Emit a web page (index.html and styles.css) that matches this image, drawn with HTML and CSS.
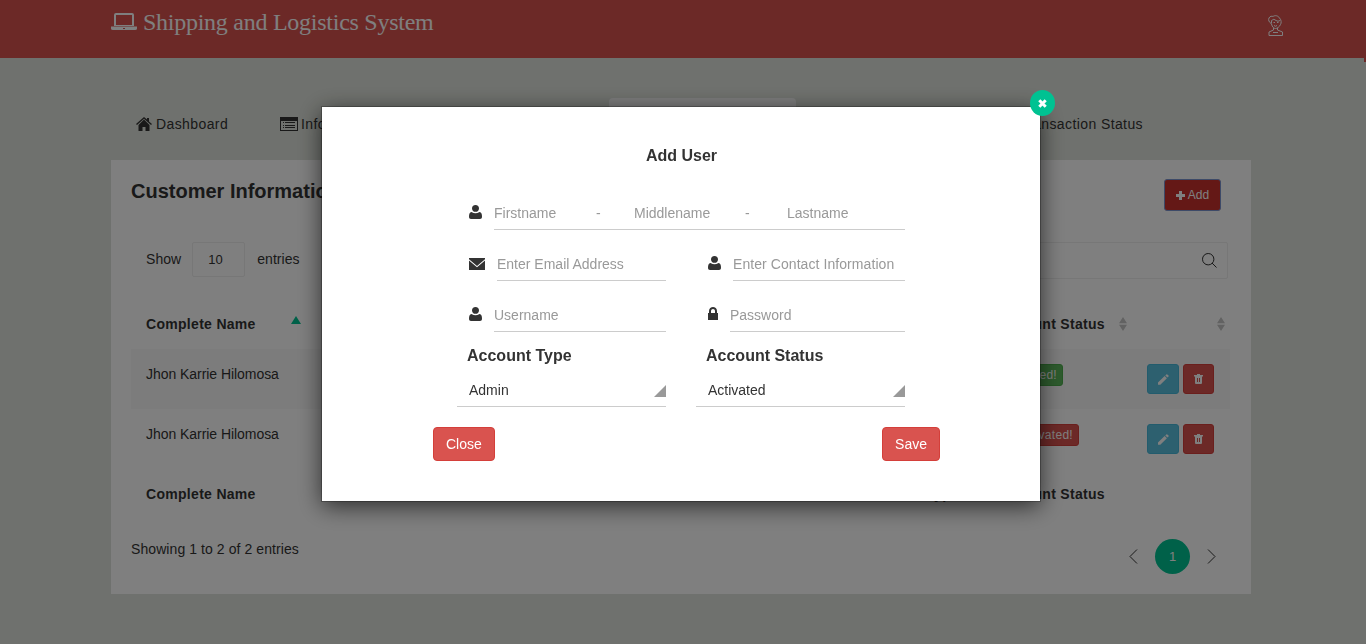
FILE: index.html
```html
<!DOCTYPE html>
<html lang="en">
<head>
<meta charset="utf-8">
<title>Shipping and Logistics System</title>
<link rel="stylesheet" href="styles.css">
</head>
<body>
<svg class="defs" width="0" height="0">
  <symbol id="user" viewBox="0 0 13 14"><path d="M6.500 0C8.700 0 10 1.400 10 3.400S8.500 6.800 6.500 6.800 3 5.400 3 3.400 4.300 0 6.500 0zM2.500 7Q4.600 8.200 6.500 8.200T10.500 7C12.500 7.500 13 9 13 11.800 13 13.200 12.200 14 11 14H2C.8 14 0 13.200 0 11.800 0 9 .5 7.500 2.500 7z"/></symbol>
  <symbol id="sort" viewBox="0 0 8 14"><path d="M4 0l4 6.200H0zM4 14l4-6.200H0z"/></symbol>
  <symbol id="pencil" viewBox="0 0 11 11"><path d="M0 10.700V8.600L6.600 2l2.300 2.300L2.300 10.700zM7.300 1.400L8.300.4q.5-.5 1 0l1.200 1.200q.5.500 0 1l-1 1z"/></symbol>
  <symbol id="trash" viewBox="0 0 9 10"><path fill-rule="evenodd" d="M0 1h3V0h3v1h3v1.500H8V9q0 1-1 1H2Q1 10 1 9V2.500H0zM3 4v4h1V4zM5 4v4h1V4z"/></symbol>
</svg>

<header class="topbar">
  <div class="brand">
    <svg class="brand-icon" width="26" height="18" viewBox="0 0 26 18"><path fill-rule="evenodd" d="M5 0h16q2 0 2 2v11H3V2q0-2 2-2zM5 2v10h16V2zM0 13.500h26v2q0 1.500-2 1.500H2q-2 0-2-1.500zM12 15v1h2v-1z"/></svg>
    <span>Shipping and Logistics System</span>
  </div>
  <svg class="avatar" width="15" height="21" viewBox="0 0 15 21"><path d="M3.500 9C1 7 0 5 1 3S4 1 5 1.500C7 0 10 .5 11.500 3 13.500 5 13.500 8 12.500 9.500 11.500 12 9 13.500 7.500 13.500S4 12 3.500 9zM3.500 8.500V5.500Q6 3 8 5.500 10 7 12 5.500M5.500 7.500h1.500M9 7.500h1.500M6 10.500q1.500 1.500 3 0M5.500 13v2L1 17v3.500h13.500V17L9.500 15v-2M5 17.500h5"/></svg>
  <i class="topbar-tail"></i>
</header>

<nav class="tabs">
  <a class="tab tab-dash"><svg width="16" height="14" viewBox="0 0 16 14"><path d="M8 0l3 2.600V1h2v3.400L16 7l-1 1-7-6.200L1 8 0 7zM2.500 8L8 2.600 13.500 8v6h-4v-4h-3v4h-4z"/></svg>Dashboard</a>
  <a class="tab tab-info"><svg width="18" height="14" viewBox="0 0 18 14"><path fill-rule="evenodd" d="M0 0h18v14H0zM1 4v9h16V4zM3 5h1v1H3zM5 5h10v1H5zM3 8h1v1H3zM5 8h10v1H5zM3 10h1v1H3zM5 10h10v1H5z"/></svg>Information</a>
  <span class="tab-current"></span>
  <a class="tab tab-status">Transaction Status</a>
</nav>

<main class="card">
  <div class="card-head">
    <h1>Customer Information</h1>
    <button class="btn-add"><svg width="9" height="9" viewBox="0 0 9 9"><path d="M3 0h3v3h3v3H6v3H3V6H0V3h3z"/></svg>Add</button>
  </div>
  <div class="tools">
    <span class="label">Show</span><span class="count">10</span><span class="label">entries</span>
    <div class="search"><svg width="15" height="15" viewBox="0 0 15 15"><circle cx="6.200" cy="6.200" r="5.700"/><path d="M10 10l4.500 4.500"/></svg></div>
  </div>
  <div class="row row-head">
    <span class="name">Complete Name</span><svg class="asc" width="10" height="8" viewBox="0 0 10 8"><path d="M5 0l5 8H0z"/></svg>
    <span class="status">Account Status</span><svg class="sort" width="8" height="14"><use href="#sort"/></svg><svg class="sort sort-last" width="8" height="14"><use href="#sort"/></svg>
  </div>
  <div class="row row-data striped">
    <span class="name">Jhon Karrie Hilomosa</span>
    <span class="badge badge-on">Activated!</span>
    <div class="actions"><button class="btn-edit"><svg width="11" height="11"><use href="#pencil"/></svg></button><button class="btn-delete"><svg width="9" height="10"><use href="#trash"/></svg></button></div>
  </div>
  <div class="row row-data">
    <span class="name">Jhon Karrie Hilomosa</span>
    <span class="badge badge-off">Deactivated!</span>
    <div class="actions"><button class="btn-edit"><svg width="11" height="11"><use href="#pencil"/></svg></button><button class="btn-delete"><svg width="9" height="10"><use href="#trash"/></svg></button></div>
  </div>
  <div class="row row-foot">
    <span class="name">Complete Name</span><span class="type">Account Type</span><span class="status">Account Status</span>
  </div>
  <div class="pager">
    <span class="showing">Showing 1 to 2 of 2 entries</span>
    <svg width="9" height="15" viewBox="0 0 9 15"><path d="M8 .5l-7 7 7 7"/></svg>
    <span class="page">1</span>
    <svg width="9" height="15" viewBox="0 0 9 15"><path d="M1 .5l7 7-7 7"/></svg>
  </div>
</main>

<div class="overlay">
  <section class="modal">
    <button class="modal-x"><svg width="9" height="9" viewBox="0 0 9 9"><path d="M1.300 1.300l6.400 6.400M7.700 1.300L1.300 7.700"/></svg></button>
    <h2>Add User</h2>
    <form class="form">
      <div class="field wide"><svg width="13" height="14"><use href="#user"/></svg><div class="input names"><span class="first">Firstname</span><span class="dash">-</span><span class="middle">Middlename</span><span class="dash">-</span><span class="last">Lastname</span></div></div>
      <div class="field"><svg class="mail" width="16" height="12" viewBox="0 0 16 12"><path d="M0 0h16v1.200L8 8 0 1.200zM0 2.400L8 9.200l8-6.800V12H0z"/></svg><div class="input">Enter Email Address</div></div>
      <div class="field"><svg width="13" height="14"><use href="#user"/></svg><div class="input contact">Enter Contact Information</div></div>
      <div class="field"><svg width="13" height="14"><use href="#user"/></svg><div class="input">Username</div></div>
      <div class="field"><svg class="lock" width="10" height="13" viewBox="0 0 10 13"><path fill-rule="evenodd" d="M0 6h1V4c0-5.300 8-5.300 8 0v2h1v7H0zM3 6h4V4C7 1.300 3 1.300 3 4z"/></svg><div class="input">Password</div></div>
      <div class="choice"><label>Account Type</label><div class="select">Admin<i></i></div></div>
      <div class="choice"><label>Account Status</label><div class="select">Activated<i></i></div></div>
    </form>
    <div class="modal-foot"><button class="btn">Close</button><button class="btn">Save</button></div>
  </section>
</div>
</body>
</html>
```
FILE: styles.css
```css
* { box-sizing: border-box; }
body {
  margin: 0;
  height: 644px;
  overflow: hidden;
  background: #dfe3dc;
  color: #333;
  font: 14px/20px "Liberation Sans", Arial, sans-serif;
}
svg { fill: currentColor; flex: none; }
button { font: inherit; padding: 0; }
.defs { display: block; }

.topbar {
  position: relative;
  display: flex;
  justify-content: space-between;
  height: 58px;
  padding: 0 83px 0 111px;
  background: #d9534f;
  color: #fff;
}
.brand {
  display: flex;
  gap: 6px;
  font: 24px/28px "Liberation Serif", "Times New Roman", serif;
  letter-spacing: -.26px;
  padding-top: 8px;
}
.brand-icon { margin-top: 5px; }
.avatar { margin-top: 15px; fill: none; stroke: #fff; stroke-width: 1; }
.topbar-tail { position: absolute; right: 0; top: 58px; width: 2px; height: 4px; background: #d9534f; }

.tabs { display: flex; height: 102px; padding: 40px 223px 0 136px; }
.tab { display: flex; align-items: center; gap: 4px; height: 52px; white-space: nowrap; letter-spacing: .4px; }
.tab-dash { width: 92px; }
.tab-info { margin-left: 52px; gap: 3px; width: 120px; }
.tab-current { width: 187px; height: 62px; margin-left: 209px; border-radius: 4px; background: #f8f8f8; }
.tab-status { margin-left: auto; }

.card { width: 1140px; height: 434px; margin-left: 111px; padding: 20px; background: #fff; }
.card-head { display: flex; justify-content: space-between; height: 62px; padding-right: 10px; }
h1 { margin: 0; font-size: 20px; line-height: 22px; }
.btn-add {
  display: flex;
  align-items: center;
  justify-content: center;
  gap: 3px;
  width: 57px;
  height: 32px;
  margin-top: -1px;
  border: 1px solid #7a94d0;
  border-radius: 3px;
  background: #c9302c;
  color: #fff;
  font-size: 12px;
}
.tools { display: flex; align-items: center; height: 35px; padding-left: 15px; }
.tools .label { margin-top: -2px; letter-spacing: .05px; }
.count { width: 53px; height: 35px; margin: 0 12px 0 11px; padding-left: 15px; border: 1px solid #eee; border-radius: 2px; line-height: 33px; font-size: 13px; }
.search {
  display: flex;
  align-items: center;
  justify-content: flex-end;
  width: 260px;
  height: 37px;
  margin: 2px 3px 0 auto;
  padding-right: 10px;
  border: 1px solid #eee;
  border-radius: 2px;
}
.search svg { margin-top: -1px; fill: none; stroke: #333; }

.row { display: flex; width: 1099px; padding-left: 15px; }
.row .name { width: 145px; flex: none; }
.row-head, .row-foot { font-weight: bold; letter-spacing: .3px; }
.row-head { height: 72px; padding-top: 37px; }
.row-head .status { margin-left: 697px; }
.asc { margin-top: 2px; color: #00c292; }
.status { flex: none; width: 104px; white-space: nowrap; }
.sort { margin: 3px 0 0 17px; color: #c4c4c4; }
.sort-last { margin-left: 90px; }
.row-data { height: 60px; padding: 15px 16px 0 15px; }
.row-data .name { letter-spacing: -.05px; }
.striped { background: #f9f9f9; }
.badge {
  height: 22px;
  margin-left: 703px;
  padding: 0 5px;
  border-radius: 3px;
  color: #fff;
  font-size: 12px;
  line-height: 20px;
  letter-spacing: .3px;
  text-align: right;
}
.badge-on { width: 69px; border: 1px solid #4cae4c; background: #5cb85c; }
.badge-off { width: 85px; border: 1px solid #d43f3a; background: #d9534f; }
.actions { display: flex; gap: 4px; margin-left: auto; }
.actions button { display: flex; align-items: center; justify-content: center; height: 30px; border-radius: 3px; color: #fff; }
.btn-edit { width: 32px; border: 1px solid #46b8da; background: #5bc0de; }
.btn-delete { width: 31px; border: 1px solid #d43f3a; background: #d9534f; }
.row-foot { height: 55px; padding-top: 15px; }
.type { width: 100px; margin-left: 573px; white-space: nowrap; }
.row-foot .status { margin-left: 34px; }
.pager { display: flex; align-items: center; height: 35px; margin-top: 15px; padding-right: 15px; }
.pager svg { margin-top: -1px; fill: none; stroke: #333; }
.showing { margin: -16px auto 0 0; letter-spacing: .08px; }
.page { width: 35px; height: 35px; margin: 0 17px; border-radius: 50%; background: #00c292; color: #fff; font-size: 13px; line-height: 35px; text-align: center; }

.overlay { position: fixed; inset: 0; background: rgba(0, 0, 0, .5); }
.modal {
  position: absolute;
  left: 322px;
  top: 107px;
  width: 718px;
  height: 394px;
  background: #fff;
  box-shadow: 0 0 0 1px rgba(0, 0, 0, .25), 0 5px 22px rgba(0, 0, 0, .65);
}
.modal-x {
  position: absolute;
  right: -15px;
  top: -17px;
  display: flex;
  align-items: center;
  justify-content: center;
  width: 25px;
  height: 26px;
  border: 0;
  border-radius: 50%;
  background: #00c292;
}
.modal-x svg { margin-right: 1px; fill: none; stroke: #fff; stroke-width: 3; }
h2 { margin: 0; padding: 39px 0 0 1px; text-align: center; font-size: 16px; line-height: 20px; }
.form { display: grid; grid-template-columns: 209px 209px; gap: 15px 30px; padding: 28px 135px 0; }
.wide { grid-column: span 2; }
.field { display: flex; align-items: center; height: 36px; padding-left: 12px; }
.field .mail { margin-top: 1px; }
.field .lock { margin-top: -1px; }
.field .input {
  flex: 1;
  height: 36px;
  margin-left: 12px;
  border-bottom: 1px solid #ccc;
  color: #999;
  line-height: 38px;
  white-space: nowrap;
}
.field .contact { letter-spacing: .07px; }
.names { display: flex; }
.first { width: 102px; }
.dash { width: 38px; }
.middle { width: 111px; }
.names .last { margin-left: 4px; }
.choice label { display: block; margin: -1px 0 0 10px; font-size: 16px; font-weight: bold; line-height: 20px; }
.select { display: flex; justify-content: space-between; height: 41px; padding-left: 12px; border-bottom: 1px solid #ccc; line-height: 48px; }
.select i { width: 12px; height: 12px; margin-top: 19px; background: #999; clip-path: polygon(100% 0, 100% 100%, 0 100%); }
.modal-foot { display: flex; justify-content: space-between; padding: 20px 100px 0 111px; }
.btn { height: 34px; padding: 0 12px; border: 1px solid #d43f3a; border-radius: 4px; background: #d9534f; color: #fff; }
```
